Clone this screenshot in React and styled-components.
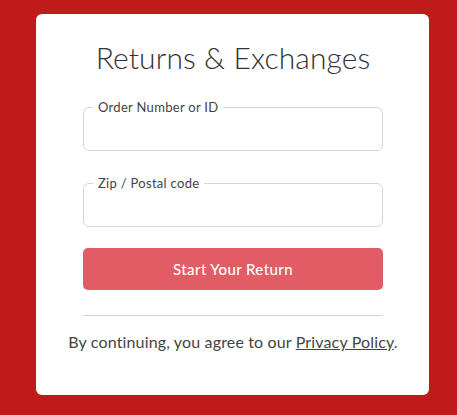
import React from "react";
import styled, { createGlobalStyle } from "styled-components";

const Global = createGlobalStyle`
  html, body { margin: 0; padding: 0; background: #c01b1b; }
  body { font-family: Lato, "Liberation Sans", sans-serif; }
`;

const Page = styled.div`
  width: 457px;
  height: 415px;
  background: #c01b1b;
  padding: 14px 0 0 36px;
  box-sizing: border-box;
`;

const Card = styled.div`
  width: 393px;
  height: 381px;
  background: #fff;
  border-radius: 6px;
  box-sizing: border-box;
  padding: 25px 46px 0 47px;
  display: flex;
  flex-direction: column;
  align-items: stretch;
`;

const Title = styled.h1`
  margin: 0 0 25px;
  text-align: center;
  font-weight: 300;
  font-size: 30px;
  line-height: 36px;
  color: #333;
  letter-spacing: 0.1px;
`;

const Field = styled.fieldset`
  margin: 0 0 ${(p) => p.$gap}px;
  padding: 0 9px;
  height: 51px;
  box-sizing: border-box;
  border: 1px solid #d3d6dc;
  border-radius: 6px;
`;

const Legend = styled.legend`
  padding: 0 5px;
  font-size: 13px;
  line-height: 14px;
  letter-spacing: 0.3px;
  color: #444;
`;

const Button = styled.button`
  height: 42px;
  border: none;
  border-radius: 5px;
  background: #e25c66;
  color: #fff;
  font-family: inherit;
  font-size: 15px;
  font-weight: 500;
  letter-spacing: 0.4px;
  margin: 0 0 25px;
`;

const Divider = styled.hr`
  border: none;
  border-top: 1px solid #d2d2d2;
  margin: 0 0 16px;
`;

const Note = styled.p`
  margin: 0;
  text-align: center;
  font-size: 16px;
  letter-spacing: 0.15px;
  color: #444;
  white-space: nowrap;
  margin-left: -30px;
  margin-right: -30px;
`;

const Link = styled.a`
  color: #444;
  text-decoration: underline;
`;

export default function App() {
  return (
    <Page>
      <Global />
      <Card>
        <Title>Returns &amp; Exchanges</Title>
        <Field $gap={25}>
          <Legend>Order Number or ID</Legend>
        </Field>
        <Field $gap={21}>
          <Legend>Zip / Postal code</Legend>
        </Field>
        <Button>Start Your Return</Button>
        <Divider />
        <Note>
          By continuing, you agree to our <Link>Privacy Policy</Link>.
        </Note>
      </Card>
    </Page>
  );
}
